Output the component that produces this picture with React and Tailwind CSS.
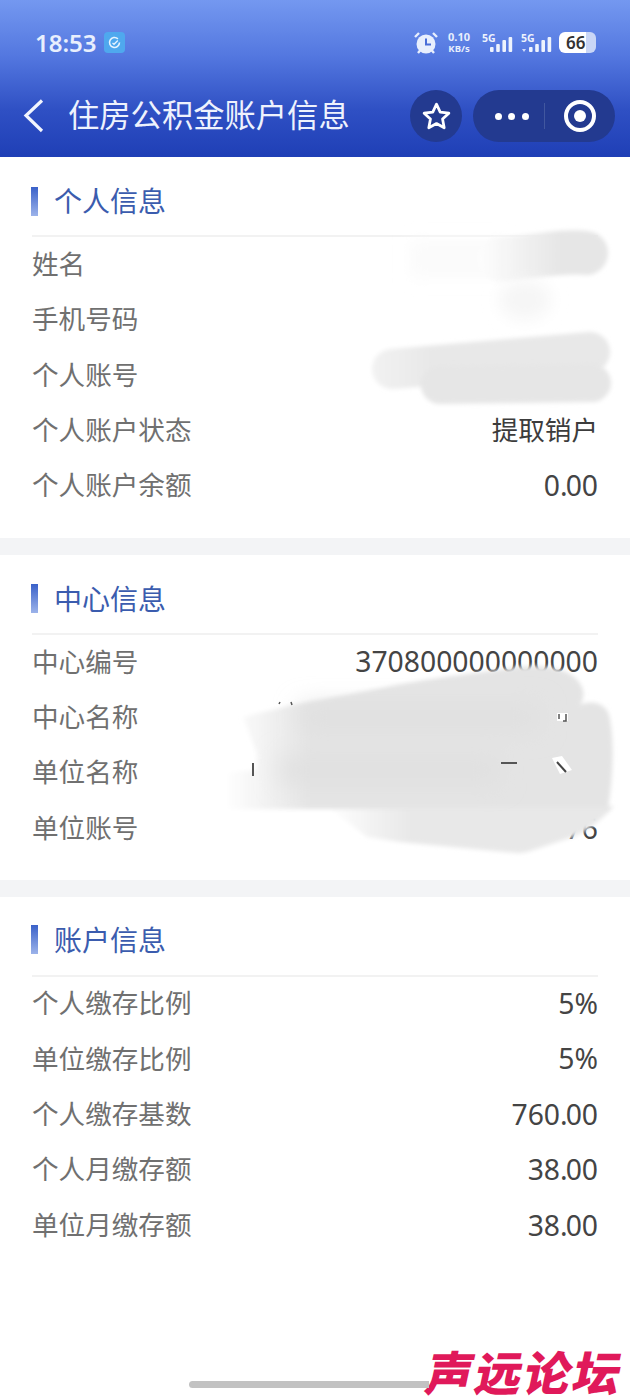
import React from "react";

const FONT = { fontFamily: '"Noto Sans", "Noto Sans CJK SC", sans-serif' };

function Signal({ dot }) {
  const hs = [5, 8, 12, 15];
  return (
    <svg width="34" height="22" viewBox="0 0 34 22" className="block">
      <text x="1" y="10" fontSize="10.5" fontWeight="700" fill="#eef3fd" fontFamily="Noto Sans">5G</text>
      {dot && <path d="M2 17h4l-2 3z" fill="#eef3fd" opacity="0.8" />}
      {hs.map((h, i) => (
        <rect key={i} x={9 + i * 6.2} y={20 - h} width="3.6" height={h} rx="1" fill="#eef3fd" />
      ))}
    </svg>
  );
}

function StatusBar() {
  return (
    <div className="flex h-[85px] items-center justify-between pl-[35px] pr-[34px]">
      <div className="flex items-center gap-[9px]">
        <span className="w-[60px] text-[24px] font-semibold leading-none text-[#e8effd]">18:53</span>
        <span className="flex h-[21px] w-[21px] items-center justify-center rounded-[4px] bg-[#4fa8ee]">
          <svg width="13" height="13" viewBox="0 0 13 13" fill="none" stroke="#e8f4ff" strokeWidth="1.6">
            <path d="M11.5 6.5a5 5 0 1 1-1.6-3.7" />
            <path d="M4.5 7 6 8.300 9.800 4.500" strokeWidth="1.3" />
          </svg>
        </span>
      </div>
      <div className="flex items-center">
        <svg width="24" height="24" viewBox="0 0 24 24" className="mr-[8px]">
          <circle cx="12" cy="13" r="9.5" fill="#e8effd" />
          <path d="M12 7.500V13.500H17" fill="none" stroke="#4a6ed8" strokeWidth="2" />
          <path d="M1 6 5 2M23 6 19 2M4 22l2.500-3M20 22l-2.500-3" stroke="#e8effd" strokeWidth="2.400" />
        </svg>
        <div className="mr-[9px] flex w-[26px] flex-col items-center font-bold text-[#e8effd]">
          <span className="text-[11px] leading-[12px]">0.10</span>
          <span className="text-[9.500px] leading-[11px]">KB/s</span>
        </div>
        <Signal />
        <span className="w-[5px]" />
        <Signal dot />
        <span className="relative ml-[5px] flex h-[21px] w-[37px] items-center rounded-[6px] bg-[linear-gradient(90deg,#ffffff_72%,#c9d6f6_72%)] pl-[7px] text-[17px] font-semibold leading-none text-[#333]">
          66
        </span>
      </div>
    </div>
  );
}

function NavBar() {
  return (
    <div className="flex h-[72px] items-start pl-[22px] pr-[15px] pt-[5px]">
      <svg width="24" height="36" viewBox="0 0 24 36" fill="none" stroke="#f2f5fe" strokeWidth="3.200" className="mt-[8px]">
        <path d="M20 2.500 4 17.500 20 33" />
      </svg>
      <h1 className="ml-[22px] flex-1 text-[31.300px] leading-[50px] font-normal text-[#eef2fd]">住房公积金账户信息</h1>
      <div className="flex h-[52px] w-[52px] items-center justify-center rounded-full bg-[#233a90]">
        <svg width="33" height="33" viewBox="0 0 24 24" fill="none" stroke="#fff" strokeWidth="2" strokeLinejoin="round">
          <path d="M12 3l2.700 5.800 6.300.8-4.600 4.300 1.200 6.300-5.600-3.100-5.600 3.100 1.200-6.300L3 9.600l6.300-.8z" />
        </svg>
      </div>
      <div className="ml-[11px] flex h-[52px] w-[142px] items-center rounded-full bg-[#233a90]">
        <div className="flex w-[71px] items-center justify-center gap-[6.500px] pl-[6px]">
          <span className="h-[7px] w-[7px] rounded-full bg-white" />
          <span className="h-[7px] w-[7px] rounded-full bg-white" />
          <span className="h-[7px] w-[7px] rounded-full bg-white" />
        </div>
        <span className="h-[26px] w-px bg-[#41579f]" />
        <div className="flex flex-1 items-center justify-center">
          <span className="flex h-[32px] w-[32px] items-center justify-center rounded-full border-[4px] border-white">
            <span className="h-[12px] w-[12px] rounded-full bg-white" />
          </span>
        </div>
      </div>
    </div>
  );
}

function Num({ value }) {
  const parts = value.split(".");
  return (
    <span className="pb-[2px] text-[28.300px] text-[#444]">
      {parts.length === 2 ? (
        <>
          {parts[0]}
          <span className="tracking-[-2px]">.</span>
          {parts[1]}
        </>
      ) : (
        value
      )}
    </span>
  );
}

function Row({ label, value, cjk }) {
  return (
    <div className="flex h-[55.4px] items-center justify-between">
      <span className="text-[26.600px] text-[#707070]">{label}</span>
      {value && (cjk ? <span className="text-[26.600px] text-[#3c3c3c]">{value}</span> : <Num value={value} />)}
    </div>
  );
}

function Section({ title, rows, top, pad = 24 }) {
  return (
    <section className="bg-white px-[32px]" style={{ paddingBottom: pad }}>
      <div className={`flex items-center ${top}`}>
        <span className="h-[29px] w-[7px] -ml-[1px] bg-[linear-gradient(180deg,#3a61c9,#9cb3ea)]" />
        <h2 className="ml-[16px] text-[28px] font-normal leading-[36px] text-[#3b5cae]">{title}</h2>
      </div>
      <div className="border-t-2 border-[#f2f2f2]">
        {rows.map((r) => (
          <Row key={r[0]} label={r[0]} value={r[1]} cjk={r[2]} />
        ))}
      </div>
    </section>
  );
}

function Smudges() {
  const fr = { filterUnits: "userSpaceOnUse", x: 0, y: 0, width: 630, height: 900 };
  return (
    <svg width="630" height="900" viewBox="0 0 630 900" className="pointer-events-none absolute left-0 top-0">
      <defs>
        <filter id="b2" {...fr}><feGaussianBlur stdDeviation="2" /></filter>
        <filter id="b6" {...fr}><feGaussianBlur stdDeviation="8" /></filter>
        <filter id="b12" {...fr}><feGaussianBlur stdDeviation="12" /></filter>
        <linearGradient id="g1" gradientUnits="userSpaceOnUse" x1="480" y1="0" x2="560" y2="0">
          <stop offset="0" stopColor="#fdfdfd" />
          <stop offset="1" stopColor="#e6e6e6" />
        </linearGradient>
        <linearGradient id="g2" gradientUnits="userSpaceOnUse" x1="225" y1="0" x2="310" y2="0">
          <stop offset="0" stopColor="#ffffff" />
          <stop offset="1" stopColor="#e4e4e4" />
        </linearGradient>
        <linearGradient id="g3" gradientUnits="userSpaceOnUse" x1="372" y1="0" x2="430" y2="0">
          <stop offset="0" stopColor="#f2f2f2" />
          <stop offset="1" stopColor="#e8e8e8" />
        </linearGradient>
        <linearGradient id="g4" gradientUnits="userSpaceOnUse" x1="325" y1="0" x2="410" y2="0">
          <stop offset="0" stopColor="#ffffff" />
          <stop offset="1" stopColor="#e8e8e8" />
        </linearGradient>
      </defs>
      <rect x="410" y="240" width="100" height="38" fill="#fbfbfb" filter="url(#b6)" />
      <path d="M500 259 C530 258 560 250 586 253" stroke="url(#g1)" strokeWidth="44" strokeLinecap="round" fill="none" filter="url(#b2)" />
      <ellipse cx="525" cy="300" rx="26" ry="20" fill="#f6f6f6" filter="url(#b6)" />
      <path d="M392 369 L590 352" stroke="url(#g3)" strokeWidth="40" strokeLinecap="round" fill="none" filter="url(#b2)" />
      <path d="M440 385 L592 383" stroke="#e6e6e6" strokeWidth="38" strokeLinecap="round" fill="none" filter="url(#b2)" />
      <path
        d="M400 806 L614 806 C606 815 590 830 575 836 L533 850 C525 853 520 853 517 853 L400 842 L367 837 L327 806 Z"
        fill="url(#g4)"
        filter="url(#b2)"
      />
      <path
        d="M293 705 L387 687 C440 676 490 672 517 667 C550 664 577 670 583 690 C584 698 582 702 580 705 C590 700 605 702 609 715 C614 735 614 770 608 809 L223 809 L223 773 L257 770 L257 753 L243 717 Z"
        fill="url(#g2)"
        filter="url(#b2)"
      />
      <path d="M300 718 H540 M280 770 H500" stroke="#e0e0e0" strokeWidth="26" filter="url(#b12)" />
      <rect x="252" y="763" width="2" height="13" fill="#555" />
      <rect x="501" y="762" width="16" height="2" fill="#555" />
      <path d="M552 758 L562 756 L572 770 L560 774 Z" fill="#fff" />
      <path d="M557 762 L566 772" stroke="#444" strokeWidth="2" />
      <path d="M557 713h11v8h-11z" fill="#fff" />
      <path d="M559 714v5M566 714v7h-3" stroke="#555" strokeWidth="1.500" fill="none" />
      <path d="M279 704l1 -2M291 702l1 3" stroke="#555" strokeWidth="1.500" />
    </svg>
  );
}

export default function App() {
  return (
    <div className="relative h-[1400px] w-[630px] overflow-hidden bg-white" style={FONT}>
      <header className="h-[157px] bg-[linear-gradient(180deg,#7498f0_0%,#5478e0_35%,#2f50c4_70%,#1f3fb6_100%)]">
        <StatusBar />
        <NavBar />
      </header>
      <Section
        title="个人信息"
        top="pt-[26px] pb-[16px]"
        rows={[
          ["姓名"],
          ["手机号码"],
          ["个人账号"],
          ["个人账户状态", "提取销户", true],
          ["个人账户余额", "0.00"],
        ]}
      />
      <div className="h-[17px] bg-[#f3f4f6]" />
      <Section
        title="中心信息"
        top="pt-[26px] pb-[16px]"
        pad={23}
        rows={[
          ["中心编号", "370800000000000"],
          ["中心名称"],
          ["单位名称"],
          ["单位账号", "76"],
        ]}
      />
      <div className="h-[17px] bg-[#f3f4f6]" />
      <Section
        title="账户信息"
        top="pt-[25px] pb-[17px]"
        rows={[
          ["个人缴存比例", "5%"],
          ["单位缴存比例", "5%"],
          ["个人缴存基数", "760.00"],
          ["个人月缴存额", "38.00"],
          ["单位月缴存额", "38.00"],
        ]}
      />
      <Smudges />
      <div className="absolute left-[427px] top-[1350px] -skew-x-12 text-[47px] font-black leading-[47px] tracking-[2px] text-[#e0195a]">
        声远论坛
      </div>
      <div className="absolute left-[189px] top-[1381px] -z-0 h-[7px] w-[240px] rounded-l-full bg-[#c2c2c2]" />
    </div>
  );
}
